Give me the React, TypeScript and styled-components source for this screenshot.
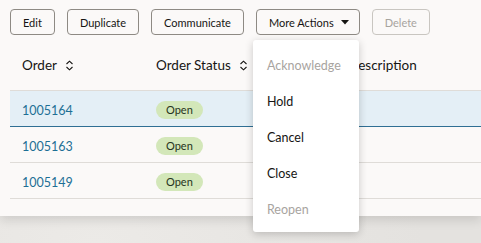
import styled, { createGlobalStyle } from "styled-components";

const GlobalStyle = createGlobalStyle`
  html, body {
    margin: 0;
    padding: 0;
  }
  body {
    font-family: Lato, "Liberation Sans", sans-serif;
    color: #161513;
    background: #e9e7e4;
  }
`;

type Order = { id: string; status: string };

const orders: Order[] = [
  { id: "1005164", status: "Open" },
  { id: "1005163", status: "Open" },
  { id: "1005149", status: "Open" },
];

const actions = [
  { label: "Acknowledge", disabled: true },
  { label: "Hold" },
  { label: "Cancel" },
  { label: "Close" },
  { label: "Reopen", disabled: true },
];

const SortIcon = () => (
  <svg width="9" height="11" viewBox="0 0 9 11" fill="none">
    <path
      d="M1.5 4 L4.5 1.2 L7.5 4 M1.5 7 L4.5 9.8 L7.5 7"
      stroke="#161513"
      strokeWidth="1.1"
    />
  </svg>
);

const Caret = () => (
  <svg width="8" height="5" viewBox="0 0 8 5">
    <path d="M0 0 L8 0 L4 4.5 Z" fill="#161513" />
  </svg>
);

export default function App() {
  const selected = "1005164";
  return (
    <Page>
      <GlobalStyle />
      <Panel>
        <Toolbar>
          <Button>Edit</Button>
          <Button>Duplicate</Button>
          <Button>Communicate</Button>
          <MenuAnchor>
            <Button $menu>
              More Actions
              <Caret />
            </Button>
            <Menu>
              {actions.map((a) => (
                <MenuItem key={a.label} $disabled={a.disabled}>
                  {a.label}
                </MenuItem>
              ))}
            </Menu>
          </MenuAnchor>
          <Button disabled>Delete</Button>
        </Toolbar>
        <Table>
          <HeaderRow>
            <HeaderCell>
              Order
              <SortIcon />
            </HeaderCell>
            <HeaderCell>
              Order Status
              <SortIcon />
            </HeaderCell>
            <HeaderCell>Description</HeaderCell>
          </HeaderRow>
          {orders.map((o) => (
            <BodyRow key={o.id} $selected={o.id === selected}>
              <Cell>
                <OrderLink>{o.id}</OrderLink>
              </Cell>
              <Cell>
                <Badge>{o.status}</Badge>
              </Cell>
              <Cell />
            </BodyRow>
          ))}
        </Table>
      </Panel>
    </Page>
  );
}

const Page = styled.div`
  width: 481px;
  height: 243px;
  overflow: hidden;
  background: radial-gradient(ellipse at 20% 100%, #eceae7 0%, #e4e2df 60%),
    #e6e4e1;
`;

const Panel = styled.div`
  height: 216px;
  background: #fbf9f8;
  box-shadow: 0 4px 10px rgba(0, 0, 0, 0.12);
  padding: 9px 0 0 10px;
  box-sizing: border-box;
`;

const Toolbar = styled.div`
  display: flex;
  gap: 12px;
  align-items: center;
`;

const Button = styled.button<{ $menu?: boolean }>`
  height: 26px;
  display: inline-flex;
  align-items: center;
  gap: 7px;
  padding: ${(p) => (p.$menu ? "0 10px 0 12px" : "0 12px")};
  background: transparent;
  border: 1px solid #8e8a84;
  border-radius: 4px;
  font-family: inherit;
  font-size: 11px;
  font-weight: 400;
  color: #161513;
  cursor: pointer;

  &:disabled {
    border-color: #c9c6c1;
    color: #a8a49f;
    cursor: default;
  }
`;

const MenuAnchor = styled.div`
  position: relative;
`;

const Menu = styled.div`
  position: absolute;
  top: 31px;
  left: -3px;
  width: 106px;
  padding: 7px 0 5px;
  background: #ffffff;
  border-radius: 3px;
  box-shadow: 0 2px 8px rgba(0, 0, 0, 0.2);
  z-index: 2;
`;

const MenuItem = styled.div<{ $disabled?: boolean }>`
  height: 36px;
  display: flex;
  align-items: center;
  padding-left: 14px;
  font-size: 12.5px;
  color: ${(p) => (p.$disabled ? "#a8a49f" : "#161513")};
`;

const Table = styled.div`
  margin-top: 5px;
`;

const columns = "134px 192px 1fr";

const HeaderRow = styled.div`
  display: grid;
  grid-template-columns: ${columns};
  height: 50px;
  align-items: center;
  border-bottom: 1px solid #dfdcd8;
`;

const HeaderCell = styled.div`
  display: flex;
  align-items: center;
  gap: 8px;
  padding-left: 12px;
  font-size: 13.5px;
  font-weight: 400;
`;

const BodyRow = styled.div<{ $selected?: boolean }>`
  display: grid;
  grid-template-columns: ${columns};
  height: 35px;
  align-items: center;
  background: ${(p) => (p.$selected ? "#e4eff6" : "transparent")};
  border-bottom: 1px solid ${(p) => (p.$selected ? "#2f6f94" : "#dfdcd8")};
`;

const Cell = styled.div`
  padding-left: 12px;
`;

const OrderLink = styled.a`
  font-size: 12.5px;
  color: #1d6f95;
  text-decoration: none;
`;

const Badge = styled.span`
  display: inline-flex;
  align-items: center;
  height: 18px;
  padding: 0 10px;
  border-radius: 9px;
  background: #d3e7b9;
  color: #263320;
  font-size: 11px;
`;
